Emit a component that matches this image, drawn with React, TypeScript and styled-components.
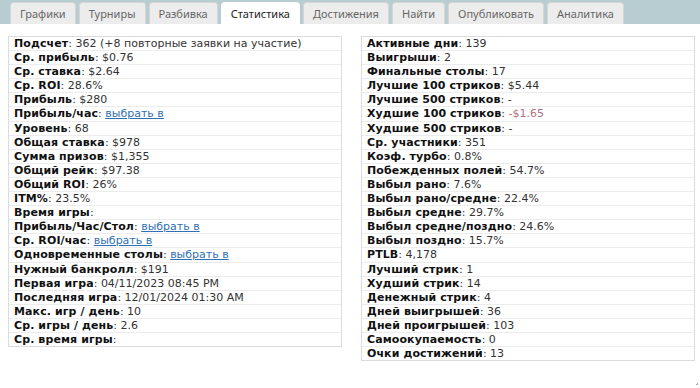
import React from "react";
import styled, { createGlobalStyle } from "styled-components";

const Global = createGlobalStyle`
  html, body { margin: 0; padding: 0; background: #fff; }
  body { font-family: "DejaVu Sans", Verdana, sans-serif; }
`;

const Page = styled.div`
  width: 700px;
  height: 388px;
  overflow: hidden;
  position: relative;
`;

const TabBar = styled.div`
  height: 24px;
  background: #b8cdd2;
  display: flex;
  align-items: flex-end;
  padding-left: 10px;
  gap: 3px;
  box-sizing: border-box;
`;

const Tab = styled.div<{ $active?: boolean }>`
  height: 22px;
  box-sizing: border-box;
  padding: 0 9px;
  display: flex;
  align-items: center;
  font-family: "Noto Sans", "DejaVu Sans", sans-serif;
  font-size: 11px;
  color: ${(p) => (p.$active ? "#222" : "#666")};
  background: ${(p) => (p.$active ? "#fff" : "#ececec")};
  border: 1px solid ${(p) => (p.$active ? "#fff" : "#d6d6d6")};
  border-bottom: none;
  border-radius: 4px 4px 0 0;
`;

const Content = styled.div`
  display: flex;
  align-items: flex-start;
  gap: 19px;
  padding: 12px 5px 0 8px;
`;

const Table = styled.div`
  flex: 1;
  border: 1px solid #dcdcdc;
  display: flex;
  flex-direction: column;
`;

const Row = styled.div`
  height: 13.1px;
  line-height: 13px;
  padding-left: 5px;
  font-size: 11px;
  color: #333;
  white-space: nowrap;
  border-top: 1px solid #ececec;
  &:first-child { border-top: none; }
`;

const Label = styled.span`
  font-weight: bold;
  color: #111;
  letter-spacing: 0.1px;
`;

const Link = styled.span`
  color: #2f6fb5;
  text-decoration: underline;
`;

const Neg = styled.span`
  color: #b5707e;
`;

const Grip = styled.div`
  position: absolute;
  right: 2px;
  bottom: 3px;
  width: 3px;
  height: 3px;
  background: linear-gradient(135deg, transparent 50%, #aaa 50%);
`;

type Item = [string, React.ReactNode];

const pick = <Link>выбрать в</Link>;

const left: Item[] = [
  ["Подсчет", "362 (+8 повторные заявки на участие)"],
  ["Ср. прибыль", "$0.76"],
  ["Ср. ставка", "$2.64"],
  ["Ср. ROI", "28.6%"],
  ["Прибыль", "$280"],
  ["Прибыль/час", pick],
  ["Уровень", "68"],
  ["Общая ставка", "$978"],
  ["Сумма призов", "$1,355"],
  ["Общий рейк", "$97.38"],
  ["Общий ROI", "26%"],
  ["ITM%", "23.5%"],
  ["Время игры", ""],
  ["Прибыль/Час/Стол", pick],
  ["Ср. ROI/час", pick],
  ["Одновременные столы", pick],
  ["Нужный банкролл", "$191"],
  ["Первая игра", "04/11/2023 08:45 PM"],
  ["Последняя игра", "12/01/2024 01:30 AM"],
  ["Макс. игр / день", "10"],
  ["Ср. игры / день", "2.6"],
  ["Ср. время игры", ""],
];

const right: Item[] = [
  ["Активные дни", "139"],
  ["Выигрыши", "2"],
  ["Финальные столы", "17"],
  ["Лучшие 100 стриков", "$5.44"],
  ["Лучшие 500 стриков", "-"],
  ["Худшие 100 стриков", <Neg>-$1.65</Neg>],
  ["Худшие 500 стриков", "-"],
  ["Ср. участники", "351"],
  ["Коэф. турбо", "0.8%"],
  ["Побежденных полей", "54.7%"],
  ["Выбыл рано", "7.6%"],
  ["Выбыл рано/средне", "22.4%"],
  ["Выбыл средне", "29.7%"],
  ["Выбыл средне/поздно", "24.6%"],
  ["Выбыл поздно", "15.7%"],
  ["PTLB", "4,178"],
  ["Лучший стрик", "1"],
  ["Худший стрик", "14"],
  ["Денежный стрик", "4"],
  ["Дней выигрышей", "36"],
  ["Дней проигрышей", "103"],
  ["Самоокупаемость", "0"],
  ["Очки достижений", "13"],
];

const tabs = [
  "Графики",
  "Турниры",
  "Разбивка",
  "Статистика",
  "Достижения",
  "Найти",
  "Опубликовать",
  "Аналитика",
];

const StatTable = ({ items }: { items: Item[] }) => (
  <Table>
    {items.map(([k, v], i) => (
      <Row key={i}>
        <Label>{k}</Label>: {v}
      </Row>
    ))}
  </Table>
);

export default function App() {
  return (
    <Page>
      <Global />
      <TabBar>
        {tabs.map((t) => (
          <Tab key={t} $active={t === "Статистика"}>
            {t}
          </Tab>
        ))}
      </TabBar>
      <Content>
        <StatTable items={left} />
        <StatTable items={right} />
      </Content>
      <Grip />
    </Page>
  );
}
